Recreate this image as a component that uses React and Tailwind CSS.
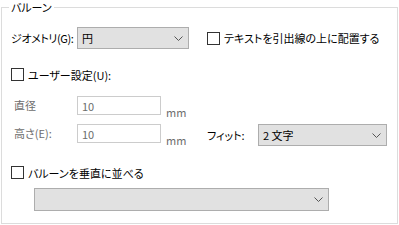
import React from "react";

const Chevron = () => (
  <svg width="9" height="5" viewBox="0 0 9 5" className="shrink-0">
    <polyline points="0.5,0.5 4.5,4.5 8.5,0.5" fill="none" stroke="#555" strokeWidth="1" />
  </svg>
);

const Combo = ({ w, h, text }) => (
  <div
    className={`${w} ${h} shrink-0 bg-[#e1e1e1] border border-[#adadad] flex items-center justify-between pl-[4px] pr-[5px]`}
  >
    <span className="leading-[14px] whitespace-nowrap">{text}</span>
    <Chevron />
  </div>
);

const Check = ({ label, className = "" }) => (
  <div className={`flex items-center h-[13px] ${className}`}>
    <div className="w-[13px] h-[13px] border border-[#333333] bg-white shrink-0" />
    <span className="ml-[4px] leading-[14px] whitespace-nowrap">{label}</span>
  </div>
);

const Input = () => (
  <div className="w-[84px] h-[19px] shrink-0 border border-[#cccccc] bg-white flex items-center pl-[4px] text-[#6d6d6d] leading-[14px]">
    10
  </div>
);

export default function App() {
  return (
    <div
      className="w-[399px] h-[225px] bg-white text-black text-[11px] [font-feature-settings:'palt'] pt-[7px] pl-[1px]"
      style={{ fontFamily: '"Noto Sans CJK JP", "Noto Sans", sans-serif' }}
    >
      <div className="relative w-[397px] h-[217px] border border-[#dcdcdc]">
        <span className="absolute left-[7px] -top-[7px] bg-white px-[2px] leading-[13px] whitespace-nowrap">
          バルーン
        </span>

        <div className="flex flex-col">
          {/* Row 1 */}
          <div className="flex items-center mt-[19px] pl-[9px]">
            <span className="w-[66px] shrink-0 leading-[14px] whitespace-nowrap tracking-[-0.4px]">ジオメトリ(G):</span>
            <Combo w="w-[112px]" h="h-[22px]" text="円" />
            <Check className="ml-[18px]" label="テキストを引出線の上に配置する" />
          </div>

          {/* Row 2 */}
          <Check className="mt-[19px] ml-[9px]" label="ユーザー設定(U):" />

          {/* Row 3 */}
          <div className="flex items-start h-[19px] mt-[15px] pl-[12px] text-[#6d6d6d]">
            <span className="w-[63px] shrink-0 leading-[19px]">直径</span>
            <Input />
            <span className="ml-[5px] mt-[9px] leading-[14px]">mm</span>
          </div>

          {/* Row 4 */}
          <div className="flex items-start h-[22px] mt-[9px] pl-[12px]">
            <span className="w-[63px] shrink-0 leading-[19px] text-[#6d6d6d] whitespace-nowrap">高さ(E):</span>
            <Input />
            <span className="ml-[5px] w-[41px] shrink-0 mt-[9px] leading-[14px] text-[#6d6d6d]">mm</span>
            <span className="w-[51px] shrink-0 leading-[22px] whitespace-nowrap">フィット:</span>
            <Combo w="w-[129px]" h="h-[22px]" text="2 文字" />
          </div>

          {/* Row 5 */}
          <Check className="mt-[20px] ml-[9px]" label="バルーンを垂直に並べる" />

          {/* Row 6 */}
          <div className="mt-[9px] ml-[32px]">
            <Combo w="w-[295px]" h="h-[23px]" text="" />
          </div>
        </div>
      </div>
    </div>
  );
}
